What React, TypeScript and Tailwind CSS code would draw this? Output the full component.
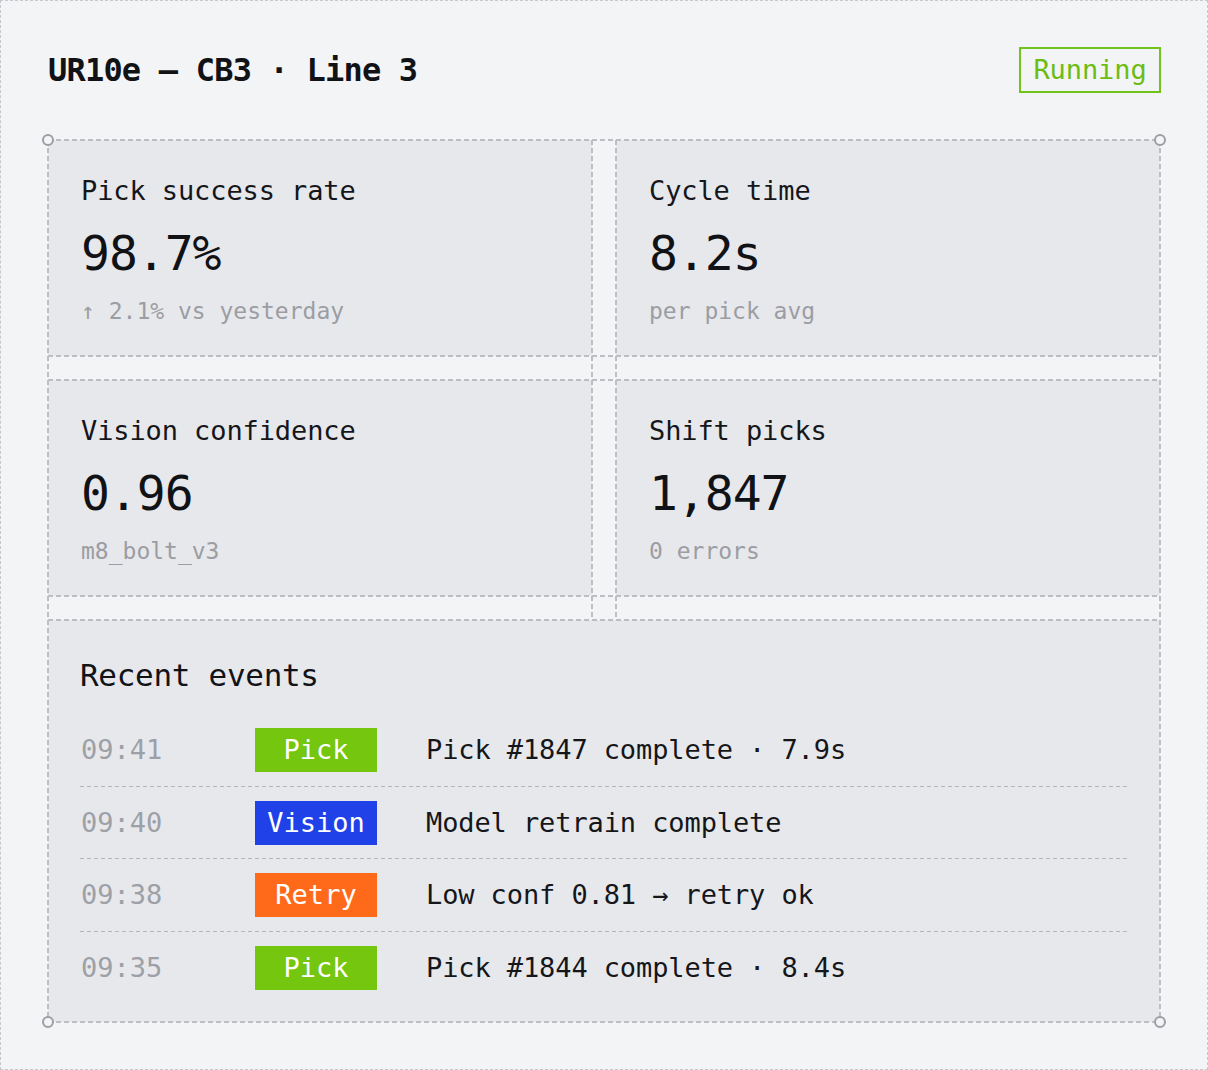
type Stat = {
  label: string;
  value: string;
  note: string;
};

type EventRow = {
  time: string;
  kind: "Pick" | "Vision" | "Retry";
  text: string;
};

const stats: Stat[] = [
  { label: "Pick success rate", value: "98.7%", note: "↑ 2.1% vs yesterday" },
  { label: "Cycle time", value: "8.2s", note: "per pick avg" },
  { label: "Vision confidence", value: "0.96", note: "m8_bolt_v3" },
  { label: "Shift picks", value: "1,847", note: "0 errors" },
];

const events: EventRow[] = [
  { time: "09:41", kind: "Pick", text: "Pick #1847 complete · 7.9s" },
  { time: "09:40", kind: "Vision", text: "Model retrain complete" },
  { time: "09:38", kind: "Retry", text: "Low conf 0.81 → retry ok" },
  { time: "09:35", kind: "Pick", text: "Pick #1844 complete · 8.4s" },
];

const badgeColor: Record<EventRow["kind"], string> = {
  Pick: "bg-[#74c60e]",
  Vision: "bg-[#2141e8]",
  Retry: "bg-[#ff6a1a]",
};

const mono = "font-['DejaVu_Sans_Mono','Liberation_Mono',monospace]";

// dashed guide strokes (5 on / 3 off)
const hDash =
  "absolute left-0 right-0 h-[2px] -translate-y-1/2 bg-[repeating-linear-gradient(90deg,#bcbec3_0_5px,transparent_5px_8px)]";
const vDash =
  "absolute w-[2px] -translate-x-1/2 bg-[repeating-linear-gradient(180deg,#bcbec3_0_5px,transparent_5px_8px)]";

function Handle({ pos }: { pos: string }) {
  return (
    <span
      className={`absolute ${pos} w-[12px] h-[12px] rounded-full border-2 border-[#9c9ea4] bg-[#f3f4f6] -translate-x-1/2 -translate-y-1/2`}
    />
  );
}

function StatCard({ stat }: { stat: Stat }) {
  return (
    <div className="bg-[#e7e8ec] h-[216px] pl-[33px] pt-[35px]">
      <div className="text-[27px] leading-[32px] tracking-[-0.1px] text-[#15161a]">
        {stat.label}
      </div>
      <div className="mt-[18px] text-[48px] leading-[56px] tracking-[-1px] font-medium text-[#111216]">
        {stat.value}
      </div>
      <div className="mt-[16px] text-[23px] leading-[28px] text-[#9b9da3]">
        {stat.note}
      </div>
    </div>
  );
}

export default function App() {
  return (
    <div className={`${mono} w-[1208px] h-[1070px] bg-[#f3f4f6] border border-dashed border-[#c6c8ce]`}>
      {/* header */}
      <header className="flex items-center justify-between pl-[47px] pr-[46px] pt-[46px]">
        <h1 className="text-[32px] leading-[40px] tracking-[-0.8px] font-bold text-[#111216]">
          UR10e — CB3 · Line 3
        </h1>
        <span className="h-[46px] w-[142px] flex items-center justify-center border-2 border-[#72c41a] text-[27px] tracking-[-0.1px] text-[#6cbc14]">
          Running
        </span>
      </header>

      {/* metrics grid with track guides */}
      <div className="relative ml-[47px] mt-[47px] w-[1112px]">
        <div className="grid grid-cols-2 gap-6">
          {stats.map((s) => (
            <StatCard key={s.label} stat={s} />
          ))}

          <div className="col-span-2 bg-[#e7e8ec] h-[402px] px-[32px] pt-[37px]">
            <h2 className="text-[31px] leading-[36px] tracking-[-0.3px] font-medium text-[#121317]">
              Recent events
            </h2>
            <div className="mt-[21px]">
              {events.map((e, i) => (
                <div key={e.time} className="relative flex items-center h-[72.5px]">
                  <span className="w-[175px] pl-px text-[27px] text-[#9da0a6]">{e.time}</span>
                  <span
                    className={`w-[122px] h-[44px] flex items-center justify-center text-[27px] text-white ${badgeColor[e.kind]}`}
                  >
                    {e.kind}
                  </span>
                  <span className="ml-[49px] text-[27px] tracking-[-0.1px] text-[#15161a]">
                    {e.text}
                  </span>
                  {i < events.length - 1 && (
                    <span className="absolute left-0 right-0 bottom-0 h-px bg-[repeating-linear-gradient(90deg,#b4b6bb_0_4px,transparent_4px_7px)]" />
                  )}
                </div>
              ))}
            </div>
          </div>
        </div>

        {/* guide lines */}
        <div className="pointer-events-none absolute inset-0">
          <div className={`${hDash} top-0`} />
          <div className={`${hDash} top-[216px]`} />
          <div className={`${hDash} top-[240px]`} />
          <div className={`${hDash} top-[456px]`} />
          <div className={`${hDash} top-[480px]`} />
          <div className={`${hDash} top-full`} />
          <div className={`${vDash} top-0 bottom-0 left-0`} />
          <div className={`${vDash} top-0 bottom-0 left-full`} />
          <div className={`${vDash} top-0 h-[480px] left-[544px]`} />
          <div className={`${vDash} top-0 h-[480px] left-[568px]`} />
        </div>

        <Handle pos="left-0 top-0" />
        <Handle pos="left-full top-0" />
        <Handle pos="left-0 top-full" />
        <Handle pos="left-full top-full" />
      </div>
    </div>
  );
}
